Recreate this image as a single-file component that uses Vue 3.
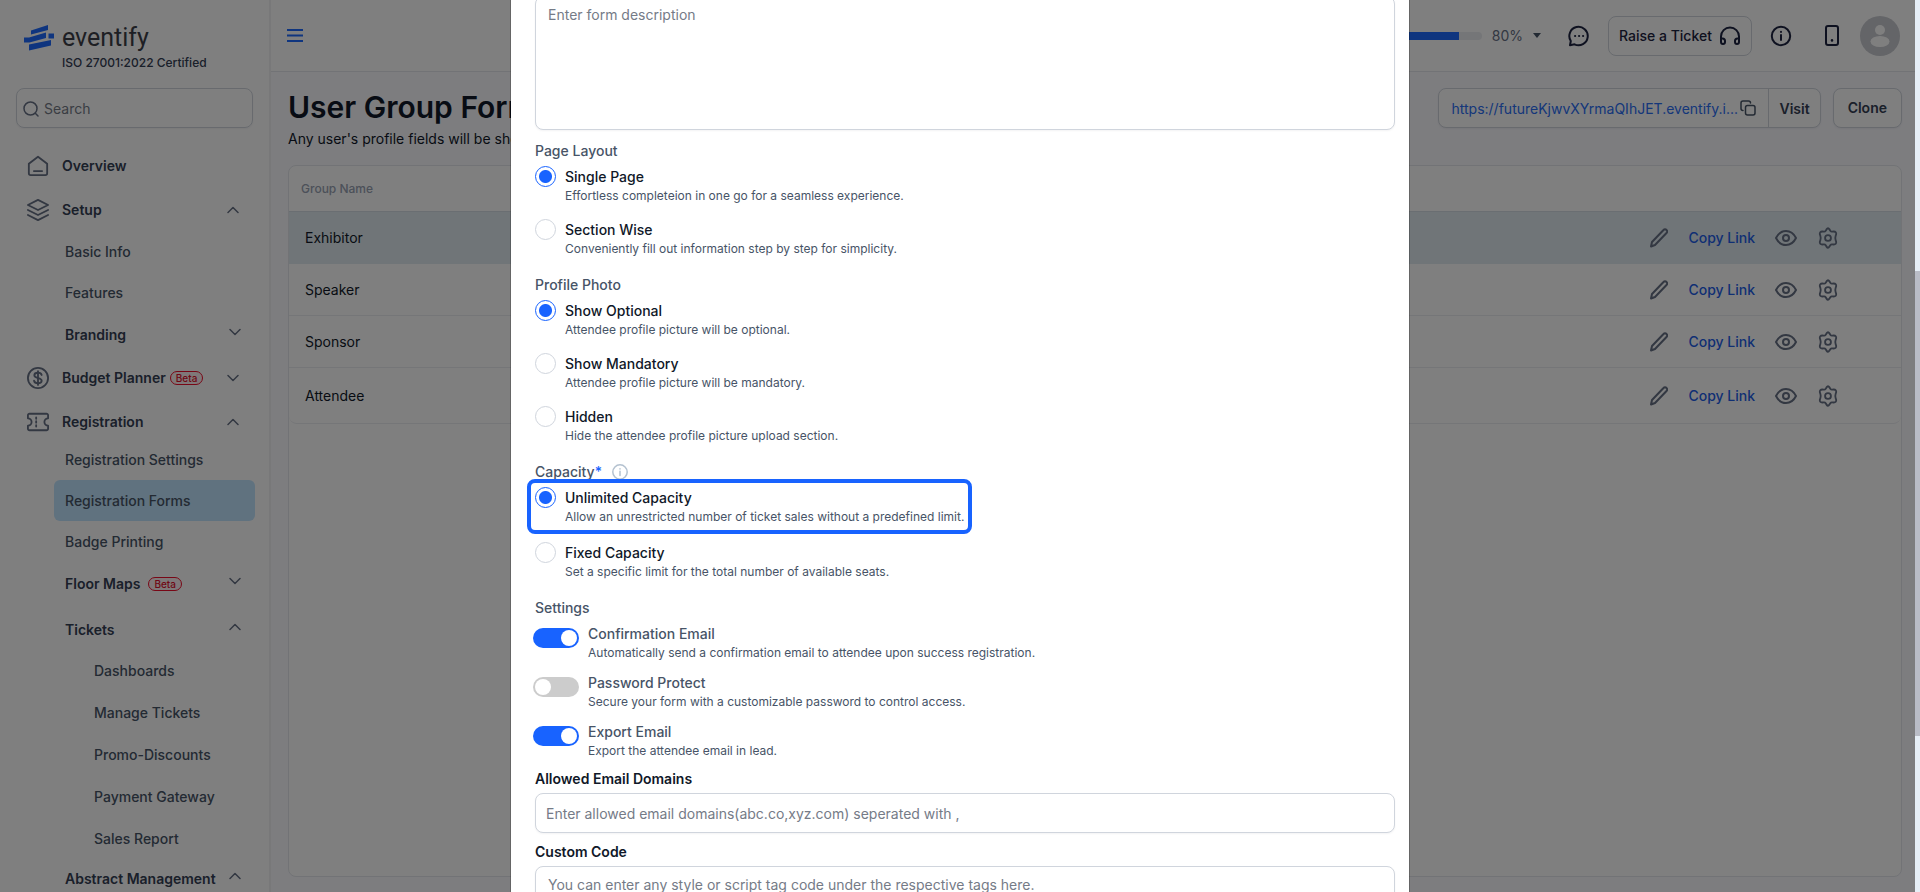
<template>
  <div class="app-shell">
    <!-- Sidebar -->
    <aside class="sidebar">
      <div class="brand">
        <svg class="brand-mark" viewBox="0 0 30 27" fill="#1f6bff">
          <path d="M7 6.500 24 1v5L7 10.500z" />
          <path d="M0 13.500 5 13.500 22 8.500v5.500L5.500 18.500H0z" />
          <path d="M24.500 9.500H30v5h-5.500z" />
          <path d="M5 20.500 27 16v5.500L5 26.500z" />
        </svg>
        <div>
          <div class="brand-name">eventify</div>
          <div class="brand-note">ISO 27001:2022 Certified</div>
        </div>
      </div>

      <label class="search">
        <svg width="16" height="16" viewBox="0 0 16 16" class="line-icon">
          <circle cx="7.500" cy="7.500" r="6.500" />
          <path d="m12.300 12.300 2.700 2.700" />
        </svg>
        <input type="text" placeholder="Search" aria-label="Search" />
      </label>

      <nav class="nav">
        <template v-for="section in sections" :key="section.label">
          <a href="#" class="nav-top">
            <svg class="line-icon nav-icon" viewBox="0 0 24 24">
              <path v-for="d in section.icon" :key="d" :d="d" />
            </svg>
            <span>{{ section.label }}</span>
            <span v-if="section.beta" class="beta">Beta</span>
            <svg v-if="section.arrow" class="chevron" viewBox="0 0 12 8">
              <path :d="arrows[section.arrow]" />
            </svg>
          </a>
          <div v-if="section.items" :class="['nav-list', { compact: section.compact }]">
            <template v-for="item in section.items" :key="item.label">
              <a
                href="#"
                :class="['nav-sub', { 'is-group': item.arrow, 'is-open': item.arrow === 'up', active: item.active }]"
              >
                <span>{{ item.label }}</span>
                <span v-if="item.beta" class="beta">Beta</span>
                <svg v-if="item.arrow" class="chevron" viewBox="0 0 12 8">
                  <path :d="arrows[item.arrow]" />
                </svg>
              </a>
              <div v-if="item.items" class="nav-deep-list">
                <a v-for="deep in item.items" :key="deep" href="#" class="nav-deep">{{ deep }}</a>
              </div>
            </template>
          </div>
        </template>
      </nav>
    </aside>

    <!-- Main area -->
    <div class="main">
      <header class="topbar">
        <button type="button" class="icon-btn menu-btn" aria-label="Toggle menu">
          <svg width="16" height="14" viewBox="0 0 16 14" fill="#1f6bff">
            <path d="M0 0h16v2H0zM0 5.500h16v2H0zM0 11h16v2H0z" />
          </svg>
        </button>
        <div class="progress"><div class="progress-fill" :style="{ width: progress + '%' }" /></div>
        <span class="progress-text">{{ progress }}%</span>
        <svg class="caret" width="8" height="5" viewBox="0 0 8 5" fill="#475467"><path d="M0 0h8L4 5z" /></svg>
        <button type="button" class="icon-btn chat-btn" aria-label="Messages">
          <svg width="22" height="22" viewBox="0 0 22 22" class="dark-icon">
            <path d="M2 20.200 2.800 16A9.200 9.200 0 1 1 6.500 19.300z" />
            <path d="M7 11h.2M11 11h.2M15 11h.2" />
          </svg>
        </button>
        <button type="button" class="raise-btn">
          Raise a Ticket
          <svg width="22" height="20" viewBox="0 0 22 20" class="dark-icon">
            <path d="M2 15v-4.500a9 9 0 0 1 18 0V15" />
            <path d="M2 12.500h1.500A2.500 2.500 0 0 1 6 15v1a2 2 0 0 1-4 0zM20 12.500h-1.500A2.500 2.500 0 0 0 16 15v1a2 2 0 0 0 4 0z" />
          </svg>
        </button>
        <button type="button" class="icon-btn info-btn" aria-label="Information">
          <svg width="22" height="22" viewBox="0 0 22 22" class="dark-icon">
            <circle cx="11" cy="11" r="9.200" />
            <path d="M11 10v5M11 6.800v.2" />
          </svg>
        </button>
        <button type="button" class="icon-btn phone-btn" aria-label="Mobile preview">
          <svg width="14" height="21" viewBox="0 0 14 21" class="dark-icon">
            <rect x="1" y="1" width="12" height="19" rx="2" />
            <path d="M7 15.300v.2" stroke-width="2.500" />
          </svg>
        </button>
        <button type="button" class="icon-btn avatar-btn" aria-label="Account">
          <svg width="40" height="40" viewBox="0 0 40 40">
            <circle cx="20" cy="20" r="20" fill="#c8cad0" />
            <circle cx="20" cy="14" r="5" fill="#fff" />
            <ellipse cx="20" cy="25.500" rx="9.500" ry="5.500" fill="#fff" />
          </svg>
        </button>
      </header>

      <div class="page-head">
        <div>
          <h1>User Group Forms</h1>
          <p>Any user's profile fields will be shown based on the group form.</p>
        </div>
        <div class="page-actions">
          <div class="link-box">
            <a href="#">https://futureKjwvXYrmaQIhJET.eventify.i...</a>
            <button type="button" class="icon-btn" aria-label="Copy address">
              <svg width="16" height="16" viewBox="0 0 16 16" class="copy-icon">
                <rect x="5.500" y="5.500" width="9.500" height="9.500" rx="2" />
                <path d="M3 10.500A2 2 0 0 1 1 8.500V3a2 2 0 0 1 2-2h5.500a2 2 0 0 1 2 2" />
              </svg>
            </button>
            <button type="button" class="visit-btn">Visit</button>
          </div>
          <button type="button" class="clone-btn">Clone</button>
        </div>
      </div>

      <div class="table-card">
        <table>
          <thead>
            <tr>
              <th>Group Name</th>
              <th aria-label="Actions"></th>
            </tr>
          </thead>
          <tbody>
            <tr v-for="(group, index) in groups" :key="group" :class="{ selected: index === 0 }">
              <td>{{ group }}</td>
              <td>
                <div class="row-actions">
                  <button type="button" class="icon-btn" aria-label="Edit">
                    <svg width="18" height="20" viewBox="0 0 18 20" class="row-icon">
                      <path d="M1 18.500 2 14 13.500 2a2 2 0 0 1 3 0 2 2 0 0 1 0 3L5 17z" />
                    </svg>
                  </button>
                  <a href="#">Copy Link</a>
                  <button type="button" class="icon-btn" aria-label="View">
                    <svg width="22" height="16" viewBox="0 0 22 16" class="row-icon">
                      <path d="M1 8C3 4 6.500 1 11 1s8 3 10 7c-2 4-5.500 7-10 7S3 12 1 8z" />
                      <circle cx="11" cy="8" r="3" />
                    </svg>
                  </button>
                  <button type="button" class="icon-btn gear-btn" aria-label="Settings">
                    <svg width="22" height="22" viewBox="0 0 24 24" class="row-icon">
                      <path d="M10.400 2.600Q12 .2 13.600 2.600L14.500 4Q15.200 5.100 16.500 5L18.200 4.900Q21.400 5 20.900 8L20.300 9.800Q19.600 12 20.300 14.200L20.900 16Q21.400 19 18.200 19.100L16.500 19Q15.200 18.900 14.500 20L13.600 21.400Q12 23.800 10.400 21.400L9.500 20Q8.800 18.900 7.500 19L5.800 19.100Q2.600 19 3.100 16L3.700 14.200Q4.400 12 3.700 9.800L3.100 8Q2.600 5 5.800 4.900L7.500 5Q8.800 5.100 9.500 4Z" />
                      <circle cx="12" cy="12" r="3.200" />
                    </svg>
                  </button>
                </div>
              </td>
            </tr>
          </tbody>
        </table>
      </div>
    </div>

    <!-- Form dialog -->
    <div class="overlay">
      <div class="dialog" role="dialog" aria-label="Form settings">
        <textarea class="description" placeholder="Enter form description" aria-label="Form description" />

        <fieldset v-for="group in radioGroups" :key="group.name" class="field-group">
          <legend>
            {{ group.label }}<span v-if="group.required" class="required">*</span>
            <svg v-if="group.required" class="hint" width="16" height="16" viewBox="0 0 16 16">
              <circle cx="8" cy="8" r="7.200" />
              <path d="M8 7.200v4.200M8 4.800v.2" />
            </svg>
          </legend>
          <label
            v-for="option in group.options"
            :key="option.value"
            :class="['option', { highlighted: option.highlighted }]"
          >
            <input v-model="form[group.name]" type="radio" :name="group.name" :value="option.value" />
            <span class="option-title">{{ option.title }}</span>
            <span class="option-text">{{ option.text }}</span>
          </label>
        </fieldset>

        <fieldset class="field-group settings">
          <legend>Settings</legend>
          <label v-for="setting in settings" :key="setting.title" class="setting">
            <input v-model="setting.on" type="checkbox" role="switch" />
            <span class="setting-title">{{ setting.title }}</span>
            <span class="option-text">{{ setting.text }}</span>
          </label>
        </fieldset>

        <label class="field-label" for="domains">Allowed Email Domains</label>
        <input
          id="domains"
          class="text-field"
          type="text"
          placeholder="Enter allowed email domains(abc.co,xyz.com) seperated with ,"
        />
        <label class="field-label" for="code">Custom Code</label>
        <textarea
          id="code"
          class="code-field"
          placeholder="You can enter any style or script tag code under the respective tags here."
        />
      </div>
    </div>
    <div class="scroll-track"><div class="scroll-thumb" /></div>
  </div>
</template>

<script setup>
import { reactive, ref } from 'vue'

const progress = ref(80)

const arrows = {
  up: 'M1 6.500 6 1.500l5 5',
  down: 'M1 1.500l5 5 5-5'
}

const sections = [
  {
    label: 'Overview',
    icon: ['M2 9.500 12 1.800l10 7.700V20a2 2 0 0 1-2 2H4a2 2 0 0 1-2-2z', 'M7.500 17.500h9']
  },
  {
    label: 'Setup',
    arrow: 'up',
    icon: ['M12 1 23 6.500 12 12 1 6.500z', 'M1 12l11 5.500L23 12', 'M1 17.500 12 23l11-5.500'],
    items: [
      { label: 'Basic Info' },
      { label: 'Features' },
      { label: 'Branding', arrow: 'down' }
    ]
  },
  {
    label: 'Budget Planner',
    arrow: 'down',
    beta: true,
    icon: [
      'M12 1a11 11 0 1 0 0 22 11 11 0 0 0 0-22z',
      'M16 8.700C15.600 7 14 6.300 12 6.300c-2.300 0-4 1-4 2.800 0 4 8 2 8 5.800 0 1.800-1.700 2.800-4 2.800s-4-1-4.300-2.700',
      'M12 4.500v15'
    ]
  },
  {
    label: 'Registration',
    arrow: 'up',
    compact: true,
    icon: [
      'M1 5a1.800 1.800 0 0 1 2-2h18a1.800 1.800 0 0 1 2 2v3a4 4 0 0 0 0 8v3a1.800 1.800 0 0 1-2 2H3a1.800 1.800 0 0 1-2-2v-3a4 4 0 0 0 0-8z',
      'M10 7v1.500M10 11.200v1.500M10 15.500V17'
    ],
    items: [
      { label: 'Registration Settings' },
      { label: 'Registration Forms', active: true },
      { label: 'Badge Printing' },
      { label: 'Floor Maps', arrow: 'down', beta: true },
      {
        label: 'Tickets',
        arrow: 'up',
        items: ['Dashboards', 'Manage Tickets', 'Promo-Discounts', 'Payment Gateway', 'Sales Report']
      },
      { label: 'Abstract Management', arrow: 'up' }
    ]
  }
]

const groups = ['Exhibitor', 'Speaker', 'Sponsor', 'Attendee']

const form = reactive({
  layout: 'single',
  photo: 'optional',
  capacity: 'unlimited'
})

const radioGroups = [
  {
    name: 'layout',
    label: 'Page Layout',
    options: [
      { value: 'single', title: 'Single Page', text: 'Effortless completeion in one go for a seamless experience.' },
      { value: 'section', title: 'Section Wise', text: 'Conveniently fill out information step by step for simplicity.' }
    ]
  },
  {
    name: 'photo',
    label: 'Profile Photo',
    options: [
      { value: 'optional', title: 'Show Optional', text: 'Attendee profile picture will be optional.' },
      { value: 'mandatory', title: 'Show Mandatory', text: 'Attendee profile picture will be mandatory.' },
      { value: 'hidden', title: 'Hidden', text: 'Hide the attendee profile picture upload section.' }
    ]
  },
  {
    name: 'capacity',
    label: 'Capacity',
    required: true,
    options: [
      {
        value: 'unlimited',
        title: 'Unlimited Capacity',
        text: 'Allow an unrestricted number of ticket sales without a predefined limit.',
        highlighted: true
      },
      { value: 'fixed', title: 'Fixed Capacity', text: 'Set a specific limit for the total number of available seats.' }
    ]
  }
]

const settings = reactive([
  {
    title: 'Confirmation Email',
    text: 'Automatically send a confirmation email to attendee upon success registration.',
    on: true
  },
  {
    title: 'Password Protect',
    text: 'Secure your form with a customizable password to control access.',
    on: false
  },
  { title: 'Export Email', text: 'Export the attendee email in lead.', on: true }
])
</script>

<style>
body {
  margin: 0;
  overflow: hidden;
}
</style>

<style scoped>
.app-shell {
  display: flex;
  height: 100vh;
  overflow: hidden;
  position: relative;
  background: #fafaff;
  color: #101828;
  font-family: Inter, "Liberation Sans", sans-serif;
  font-size: 14px;
  line-height: 20px;
}

.app-shell *,
.app-shell *::before {
  box-sizing: border-box;
}

button,
input,
textarea {
  font: inherit;
  color: inherit;
}

a {
  color: inherit;
  text-decoration: none;
}

.icon-btn {
  display: flex;
  padding: 0;
  border: 0;
  background: none;
}

.line-icon,
.dark-icon,
.row-icon,
.copy-icon,
.chevron,
.hint {
  fill: none;
  stroke: #667085;
  stroke-width: 2;
  stroke-linecap: round;
  stroke-linejoin: round;
  flex-shrink: 0;
}

.dark-icon {
  stroke: #1d2340;
}

.copy-icon {
  stroke: #475467;
  stroke-width: 1.5;
}

/* Sidebar */
.sidebar {
  width: 271px;
  flex-shrink: 0;
  overflow: hidden;
  background: #fff;
  border-right: 2px solid #f0f0f3;
}

.brand {
  display: flex;
  gap: 8px;
  height: 88px;
  padding: 24px 0 0 24px;
}

.brand-mark {
  width: 30px;
  height: 27px;
}

.brand-name {
  color: #3c3e48;
  font-family: Roboto, sans-serif;
  font-size: 25px;
  line-height: 28px;
}

.brand-note {
  color: #344054;
  font-size: 12px;
  font-weight: 500;
  line-height: 22px;
}

.search {
  display: flex;
  align-items: center;
  gap: 5px;
  height: 40px;
  margin: 0 16px 17px;
  padding: 1px 6px 0;
  border: 1px solid #d0d5dd;
  border-radius: 8px;
  box-shadow: 0 1px 2px rgba(16, 24, 40, 0.05);
}

.search input {
  width: 100%;
  padding: 0;
  border: 0;
  outline: 0;
  background: none;
}

.search .line-icon {
  stroke-width: 1.5;
}

input::placeholder,
textarea::placeholder {
  color: #757b87;
  opacity: 1;
}

.nav-top,
.nav-sub {
  display: flex;
  align-items: center;
  font-weight: 600;
  color: #344054;
}

.nav-top {
  height: 42px;
  margin-bottom: 2px;
  padding: 0 30px 0 27px;
}

.nav-icon {
  width: 22px;
  height: 22px;
  margin-right: 13px;
}

.chevron {
  width: 12px;
  height: 8px;
  margin-left: auto;
  stroke-width: 1.5;
}

.nav-list {
  margin-top: -2px;
}

.nav-list.compact {
  margin-top: -6px;
}

.nav-sub {
  height: 41px;
  margin: 0 14px 0 54px;
  padding: 0 14px 0 11px;
  border-radius: 6px;
  font-weight: 500;
  color: #475467;
}

.nav-sub.is-group {
  height: 44px;
  font-weight: 600;
  color: #344054;
}

.nav-sub.is-open {
  margin-top: 2px;
}

.nav-sub.active {
  background: #c0e4fe;
}

.nav-sub .chevron {
  margin-bottom: 6px;
}

.nav-deep-list {
  margin: -2px 0 -5px;
}

.nav-deep {
  display: flex;
  align-items: center;
  height: 42px;
  padding-left: 94px;
  font-weight: 500;
  color: #475467;
}

.beta {
  margin-left: 4px;
  padding: 0 5px;
  border: 1px solid #f00f2c;
  border-radius: 8px;
  background: #fff0f2;
  color: #e0102c;
  font-size: 10px;
  font-weight: 500;
  line-height: 12px;
}

.nav-sub .beta {
  margin-left: 8px;
}

/* Main area */
.main {
  display: flex;
  flex: 1;
  flex-direction: column;
  min-width: 0;
  padding-right: 5px;
}

.topbar {
  display: flex;
  align-items: center;
  height: 72px;
  flex-shrink: 0;
  padding: 0 15px 0 16px;
  background: #fff;
  border-bottom: 1px solid #e4e6ec;
}

.menu-btn {
  margin-right: auto;
}

.progress {
  width: 115px;
  height: 8px;
  overflow: hidden;
  border-radius: 4px;
  background: #eaecf0;
}

.progress-fill {
  height: 100%;
  background: #1f6bff;
}

.progress-text {
  margin: 0 10px;
  color: #667085;
}

.chat-btn {
  margin: 0 18px 0 27px;
}

.raise-btn {
  display: flex;
  align-items: center;
  justify-content: space-between;
  width: 144px;
  height: 40px;
  padding: 0 10px;
  border: 1px solid #d0d5dd;
  border-radius: 8px;
  background: #fff;
  color: #1d2340;
  font-weight: 500;
}

.info-btn {
  margin: 0 33px 0 18px;
}

.avatar-btn {
  margin-left: 21px;
}

.page-head {
  display: flex;
  justify-content: space-between;
  padding: 16px 13px 16px 17px;
}

h1 {
  margin: 0;
  font-size: 30px;
  font-weight: 600;
  line-height: 38px;
  white-space: nowrap;
}

.page-head p {
  margin: 3px 0 0;
}

.page-actions {
  display: flex;
  gap: 12px;
}

.link-box,
.clone-btn {
  display: flex;
  align-items: center;
  height: 40px;
  border: 1px solid #d0d5dd;
  border-radius: 8px;
  background: #fff;
  box-shadow: 0 1px 2px rgba(16, 24, 40, 0.05);
}

.link-box a {
  width: 290px;
  padding: 1px 0 0 12px;
  color: #2a6ef5;
  white-space: nowrap;
}

.link-box .icon-btn {
  margin: 0 12px 0 11px;
}

.visit-btn,
.clone-btn {
  color: #344054;
  font-weight: 600;
}

.visit-btn {
  align-self: stretch;
  padding: 1px 10px 0;
  border: 0;
  border-left: 1px solid #d0d5dd;
  background: none;
}

.clone-btn {
  padding: 0 14px;
}

.table-card {
  flex: 1;
  margin: 0 13px 15px 17px;
  border: 1px solid #e4e7ec;
  border-radius: 8px;
  background: #fff;
  overflow: hidden;
}

table {
  width: 100%;
  border-spacing: 0;
}

th {
  height: 46px;
  padding: 0 12px;
  border-bottom: 1px solid #d5dce4;
  color: #98a2b3;
  font-size: 12px;
  font-weight: 500;
  text-align: left;
}

td {
  height: 52px;
  padding: 0 16px;
  border-bottom: 1px solid #eaecf0;
}

tr:last-child td {
  height: 56px;
}

tr:last-child td:first-child {
  border-bottom-left-radius: 8px;
}

tr:last-child td:last-child {
  border-bottom-right-radius: 8px;
}

.selected td {
  background: #e0eaf0;
  border-color: #e0eaf0;
}

.row-actions {
  display: flex;
  align-items: center;
  justify-content: flex-end;
  gap: 20px;
  padding-right: 46px;
}

.row-actions a {
  color: #1f5fe8;
  font-weight: 500;
}

/* Dialog */
.overlay {
  position: absolute;
  inset: 0;
  display: flex;
  justify-content: center;
  background: rgba(0, 0, 0, 0.5);
}

.dialog {
  display: flex;
  flex-direction: column;
  width: 900px;
  max-width: 100%;
  padding: 0 14px 0 24px;
  border: solid rgba(0, 0, 0, 0.2);
  border-width: 0 1px;
  background: #fff;
  background-clip: padding-box;
  color: #475467;
}

.description,
.text-field,
.code-field {
  display: block;
  width: 100%;
  flex-shrink: 0;
  resize: none;
  border: 1px solid #d0d5dd;
  border-radius: 8px;
  background: #fff;
  box-shadow: 0 1px 2px rgba(16, 24, 40, 0.05);
}

.description {
  height: 134px;
  margin: -4px 0 11px;
  padding: 8px 12px;
}

.field-group {
  min-width: 0;
  margin: 0 0 17px;
  padding: 0;
  border: 0;
}

legend {
  display: flex;
  align-items: center;
  height: 20px;
  margin-bottom: 5px;
  padding: 0;
  font-weight: 500;
}

.required {
  color: #1863ff;
}

.hint {
  margin-left: 10px;
  stroke: #b4c2d0;
  stroke-width: 1.5;
}

.option {
  position: relative;
  display: grid;
  grid-template-columns: 21px max-content;
  grid-template-rows: 21px 18px;
  column-gap: 9px;
  width: max-content;
}

.option + .option {
  margin-top: 14px;
}

.option input {
  appearance: none;
  width: 21px;
  height: 21px;
  margin: 0;
  border: 1px solid #d0d5dd;
  border-radius: 50%;
}

.option input:checked {
  border-color: #1863ff;
  background: radial-gradient(circle, #1863ff 6px, #fff 7px);
}

.option-title {
  color: #101828;
  font-weight: 500;
  line-height: 21px;
}

.option-text {
  grid-column: 2;
  font-size: 12px;
  line-height: 18px;
}

.option.highlighted {
  margin-bottom: 16px;
}

.option.highlighted + .option {
  margin-top: 0;
}

.option.highlighted::before {
  content: "";
  position: absolute;
  inset: -8px;
  border: 4px solid #1863ff;
  border-radius: 8px;
}

.settings {
  margin-bottom: 9px;
}

.settings legend {
  margin-bottom: 6px;
}

.setting {
  display: grid;
  grid-template-columns: 46px max-content;
  grid-template-rows: 20px 18px;
  column-gap: 9px;
  width: max-content;
  margin-left: -2px;
}

.setting + .setting {
  margin-top: 11px;
}

.setting input {
  appearance: none;
  width: 46px;
  height: 20px;
  margin: 4px 0 0;
  padding: 2px;
  border-radius: 10px;
  background: #ccc;
}

.setting input::before {
  content: "";
  display: block;
  width: 16px;
  height: 16px;
  border-radius: 50%;
  background: #fff;
}

.setting input:checked {
  background: #1863ff;
}

.setting input:checked::before {
  margin-left: auto;
}

.setting-title {
  font-weight: 500;
}

.field-label {
  margin-bottom: 4px;
  color: #101828;
  font-weight: 600;
}

.text-field {
  height: 40px;
  margin-bottom: 9px;
  padding: 0 10px;
}

.code-field {
  height: 120px;
  padding: 8px 12px;
}

.scroll-track {
  position: absolute;
  inset: 0 0 0 auto;
  width: 5px;
  padding-top: 271px;
  background: #e6eef6;
}

.scroll-thumb {
  height: 465px;
  background: #b9bcc6;
}
</style>
